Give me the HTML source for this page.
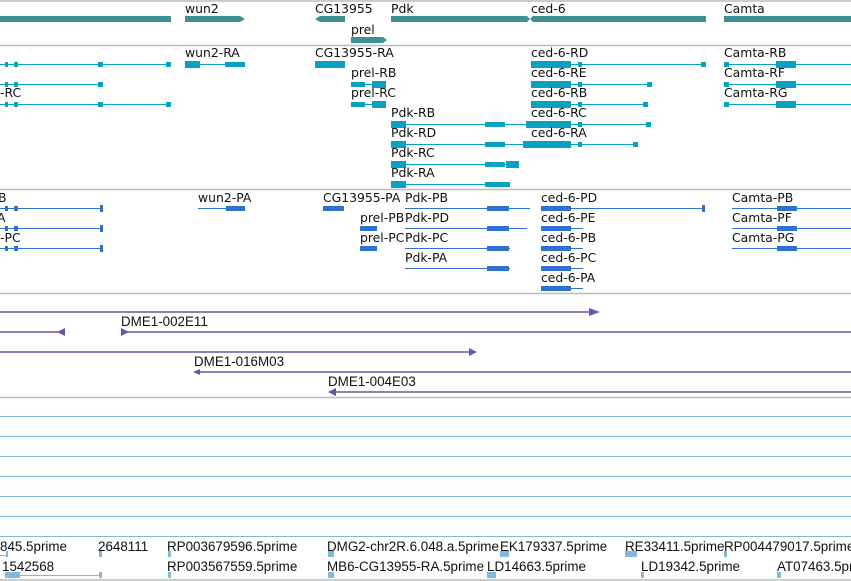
<!DOCTYPE html>
<html><head><meta charset="utf-8"><style>
html,body{margin:0;padding:0;background:#fff;width:851px;height:581px;overflow:hidden}
svg{display:block}
text{font-family:"DejaVu Sans","Liberation Sans",sans-serif;font-size:12.4px;fill:#111}
.n{font-family:"Liberation Sans",sans-serif;font-size:13.4px}
</style></head><body>
<svg width="851" height="581" xmlns="http://www.w3.org/2000/svg">
<g stroke="#bbb" stroke-width="1.5">
<line x1="0" y1="1" x2="851" y2="1"/><line x1="0" y1="45.5" x2="851" y2="45.5"/>
<line x1="0" y1="189.5" x2="851" y2="189.5"/><line x1="0" y1="293.5" x2="851" y2="293.5"/>
<line x1="0" y1="397.5" x2="851" y2="397.5"/><line x1="0" y1="580" x2="851" y2="580"/>
</g>
<g fill="#3f9093">
<rect x="0" y="16" width="171" height="6"/>
<polygon points="185,16 240,16 245,19 240,22 185,22"/>
<polygon points="320,16 345,16 345,22 320,22 315,19"/>
<polygon points="391,16 527,16 530,19 533,16 706,16 706,22 533,22 530,19 527,22 391,22"/>
<rect x="724" y="16" width="127" height="6"/>
<polygon points="351,37 383,37 387,40 383,43 351,43"/>
</g>
<text x="185" y="13">wun2</text><text x="315" y="13">CG13955</text><text x="391" y="13">Pdk</text>
<text x="531" y="13">ced-6</text><text x="724" y="13">Camta</text><text x="351" y="34">prel</text>
<g stroke="#0aa0c0" stroke-width="1">
<line x1="0" y1="64.5" x2="171" y2="64.5"/><line x1="185" y1="64.5" x2="245" y2="64.5"/>
<line x1="315" y1="64.5" x2="345" y2="64.5"/><line x1="531" y1="64.5" x2="706" y2="64.5"/><line x1="724" y1="64.5" x2="851" y2="64.5"/>
<line x1="0" y1="84.5" x2="103" y2="84.5"/><line x1="351" y1="84.5" x2="386" y2="84.5"/><line x1="531" y1="84.5" x2="652" y2="84.5"/><line x1="724" y1="84.5" x2="851" y2="84.5"/>
<line x1="0" y1="104.5" x2="171" y2="104.5"/><line x1="351" y1="104.5" x2="386" y2="104.5"/><line x1="531" y1="104.5" x2="648" y2="104.5"/><line x1="724" y1="104.5" x2="851" y2="104.5"/>
<line x1="391" y1="124.5" x2="651" y2="124.5"/>
<line x1="391" y1="144.5" x2="638" y2="144.5"/>
<line x1="391" y1="164.5" x2="519" y2="164.5"/>
<line x1="391" y1="184.5" x2="510" y2="184.5"/>
</g>
<g fill="#0aa0c0">
<rect x="5" y="62" width="3" height="5"/><rect x="14" y="62" width="4" height="5"/><rect x="98" y="62" width="5" height="5"/><rect x="166" y="62" width="5" height="5"/>
<rect x="185" y="61" width="15" height="7"/><rect x="225" y="62" width="20" height="5"/>
<rect x="315" y="61" width="30" height="7"/>
<rect x="531" y="61" width="40" height="7"/><rect x="578" y="62" width="4" height="5"/><rect x="701" y="62" width="5" height="5"/>
<rect x="724" y="62" width="5" height="5"/><rect x="776" y="61" width="20" height="7"/>
<rect x="5" y="82" width="3" height="5"/><rect x="14" y="82" width="4" height="5"/><rect x="98" y="82" width="5" height="5"/>
<rect x="351" y="82" width="14" height="5"/><rect x="372" y="81" width="14" height="7"/>
<rect x="531" y="81" width="40" height="7"/><rect x="578" y="82" width="4" height="5"/><rect x="647" y="82" width="5" height="5"/>
<rect x="724" y="82" width="5" height="5"/><rect x="776" y="81" width="20" height="7"/>
<rect x="5" y="102" width="3" height="5"/><rect x="14" y="102" width="4" height="5"/><rect x="98" y="102" width="5" height="5"/><rect x="166" y="102" width="5" height="5"/>
<rect x="351" y="102" width="14" height="5"/><rect x="372" y="101" width="14" height="7"/>
<rect x="531" y="101" width="40" height="7"/><rect x="578" y="102" width="4" height="5"/><rect x="643" y="102" width="5" height="5"/>
<rect x="724" y="102" width="5" height="5"/><rect x="776" y="101" width="20" height="7"/>
<rect x="391" y="121" width="15" height="7"/><rect x="485" y="122" width="20" height="5"/><rect x="526" y="121" width="45" height="7"/><rect x="578" y="122" width="4" height="5"/><rect x="646" y="122" width="5" height="5"/>
<rect x="391" y="141" width="15" height="7"/><rect x="485" y="142" width="20" height="5"/><rect x="523" y="141" width="48" height="7"/><rect x="578" y="142" width="4" height="5"/><rect x="633" y="142" width="5" height="5"/>
<rect x="391" y="161" width="15" height="7"/><rect x="485" y="162" width="20" height="5"/><rect x="506" y="161" width="13" height="7"/>
<rect x="391" y="181" width="15" height="7"/><rect x="485" y="182" width="25" height="5"/>
</g>
<text x="185" y="57">wun2-RA</text><text x="315" y="57">CG13955-RA</text><text x="531" y="57">ced-6-RD</text><text x="724" y="57">Camta-RB</text>
<text x="351" y="77">prel-RB</text><text x="531" y="77">ced-6-RE</text><text x="724" y="77">Camta-RF</text>
<text x="0" y="97">-RC</text><text x="351" y="97">prel-RC</text><text x="531" y="97">ced-6-RB</text><text x="724" y="97">Camta-RG</text>
<text x="391" y="117">Pdk-RB</text><text x="531" y="117">ced-6-RC</text>
<text x="391" y="137">Pdk-RD</text><text x="531" y="137">ced-6-RA</text>
<text x="391" y="157">Pdk-RC</text><text x="391" y="177">Pdk-RA</text>
<g stroke="#2f6fd0" stroke-width="1">
<line x1="0" y1="208.5" x2="103" y2="208.5"/><line x1="198" y1="208.5" x2="245" y2="208.5"/><line x1="323" y1="208.5" x2="344" y2="208.5"/><line x1="405" y1="208.5" x2="530" y2="208.5"/><line x1="541" y1="208.5" x2="705" y2="208.5"/><line x1="732" y1="208.5" x2="851" y2="208.5"/>
<line x1="0" y1="228.5" x2="103" y2="228.5"/><line x1="360" y1="228.5" x2="377" y2="228.5"/><line x1="405" y1="228.5" x2="527" y2="228.5"/><line x1="541" y1="228.5" x2="583" y2="228.5"/><line x1="732" y1="228.5" x2="851" y2="228.5"/>
<line x1="0" y1="248.5" x2="103" y2="248.5"/><line x1="360" y1="248.5" x2="377" y2="248.5"/><line x1="405" y1="248.5" x2="510" y2="248.5"/><line x1="541" y1="248.5" x2="583" y2="248.5"/><line x1="732" y1="248.5" x2="851" y2="248.5"/>
<line x1="405" y1="268.5" x2="510" y2="268.5"/><line x1="541" y1="268.5" x2="583" y2="268.5"/>
<line x1="541" y1="288.5" x2="583" y2="288.5"/>
</g>
<g fill="#2f6fd0">
<rect x="5" y="206" width="3" height="5"/><rect x="14" y="206" width="4" height="5"/><rect x="100" y="205" width="3" height="7"/>
<rect x="5" y="226" width="3" height="5"/><rect x="14" y="226" width="4" height="5"/><rect x="100" y="225" width="3" height="7"/>
<rect x="5" y="246" width="3" height="5"/><rect x="14" y="246" width="4" height="5"/><rect x="100" y="245" width="3" height="7"/>
<rect x="226" y="206" width="19" height="5"/><rect x="323" y="206" width="21" height="5"/>
<rect x="487" y="206" width="22" height="5"/><rect x="487" y="226" width="22" height="5"/><rect x="487" y="246" width="22" height="5"/><rect x="487" y="266" width="22" height="5"/>
<rect x="360" y="226" width="17" height="5"/><rect x="360" y="246" width="17" height="5"/>
<rect x="541" y="206" width="30" height="5"/><rect x="541" y="226" width="30" height="5"/><rect x="541" y="246" width="30" height="5"/><rect x="541" y="266" width="30" height="5"/><rect x="541" y="286" width="30" height="5"/>
<rect x="702" y="205" width="3" height="7"/>
<rect x="777" y="206" width="20" height="5"/><rect x="777" y="226" width="20" height="5"/><rect x="777" y="246" width="20" height="5"/>
</g>
<text x="-2" y="202">B</text><text x="198" y="202">wun2-PA</text><text x="323" y="202">CG13955-PA</text><text x="405" y="202">Pdk-PB</text><text x="541" y="202">ced-6-PD</text><text x="732" y="202">Camta-PB</text>
<text x="-3" y="222">A</text><text x="360" y="222">prel-PB</text><text x="405" y="222">Pdk-PD</text><text x="541" y="222">ced-6-PE</text><text x="732" y="222">Camta-PF</text>
<text x="0" y="242">-PC</text><text x="360" y="242">prel-PC</text><text x="405" y="242">Pdk-PC</text><text x="541" y="242">ced-6-PB</text><text x="732" y="242">Camta-PG</text>
<text x="405" y="262">Pdk-PA</text><text x="541" y="262">ced-6-PC</text><text x="541" y="282">ced-6-PA</text>
<g stroke="#7050a8" stroke-width="1.5">
<line x1="0" y1="312" x2="596" y2="312"/><line x1="0" y1="332" x2="62" y2="332"/><line x1="123" y1="332" x2="851" y2="332"/>
<line x1="0" y1="352" x2="474" y2="352"/><line x1="196" y1="372" x2="851" y2="372"/><line x1="330" y1="392" x2="851" y2="392"/>
</g>
<g fill="#7050a8">
<polygon points="589,308 600,312 589,316"/><polygon points="65,328 57,332 65,336"/><polygon points="121,328 129,332 121,336"/>
<polygon points="469,348 477,352 469,356"/><polygon points="193,372 200,369 200,375"/><polygon points="328,392 336,388 336,396"/>
</g>
<text class="n" x="121" y="326">DME1-002E11</text><text class="n" x="194" y="366">DME1-016M03</text><text class="n" x="328" y="386">DME1-004E03</text>
<g stroke="#80b8e0" stroke-width="1">
<line x1="0" y1="416.5" x2="851" y2="416.5"/><line x1="0" y1="436.5" x2="851" y2="436.5"/><line x1="0" y1="456.5" x2="851" y2="456.5"/>
<line x1="0" y1="476.5" x2="851" y2="476.5"/><line x1="0" y1="496.5" x2="851" y2="496.5"/><line x1="0" y1="516.5" x2="851" y2="516.5"/>
<line x1="0" y1="536.5" x2="851" y2="536.5"/>
<line x1="0" y1="555.5" x2="7" y2="555.5"/><line x1="5" y1="575.5" x2="102" y2="575.5"/>
</g>
<g fill="#80b8e0">
<rect x="6" y="551" width="2" height="6"/><rect x="99" y="551" width="3" height="6"/><rect x="168" y="551" width="3" height="6"/>
<rect x="328" y="551" width="6" height="6"/><rect x="500" y="551" width="9" height="6"/><rect x="625" y="551" width="12" height="6"/><rect x="724" y="551" width="3" height="6"/>
<rect x="5" y="572" width="15" height="6"/><rect x="99" y="572" width="3" height="6"/><rect x="168" y="572" width="3" height="6"/>
<rect x="328" y="572" width="6" height="6"/><rect x="487" y="572" width="9" height="6"/><rect x="641" y="572" width="3" height="6"/><rect x="777" y="572" width="4" height="6"/>
</g>
<text class="n" x="0" y="551">845.5prime</text><text class="n" x="98" y="551">2648111</text><text class="n" x="167" y="551">RP003679596.5prime</text>
<text class="n" x="327" y="551">DMG2-chr2R.6.048.a.5prime</text><text class="n" x="500" y="551">EK179337.5prime</text><text class="n" x="625" y="551">RE33411.5prime</text><text class="n" x="724" y="551">RP004479017.5prime</text>
<text class="n" x="2" y="571">1542568</text><text class="n" x="167" y="571">RP003567559.5prime</text><text class="n" x="327" y="571">MB6-CG13955-RA.5prime</text>
<text class="n" x="487" y="571">LD14663.5prime</text><text class="n" x="641" y="571">LD19342.5prime</text><text class="n" x="777" y="571">AT07463.5prime</text>
</svg>
</body></html>
